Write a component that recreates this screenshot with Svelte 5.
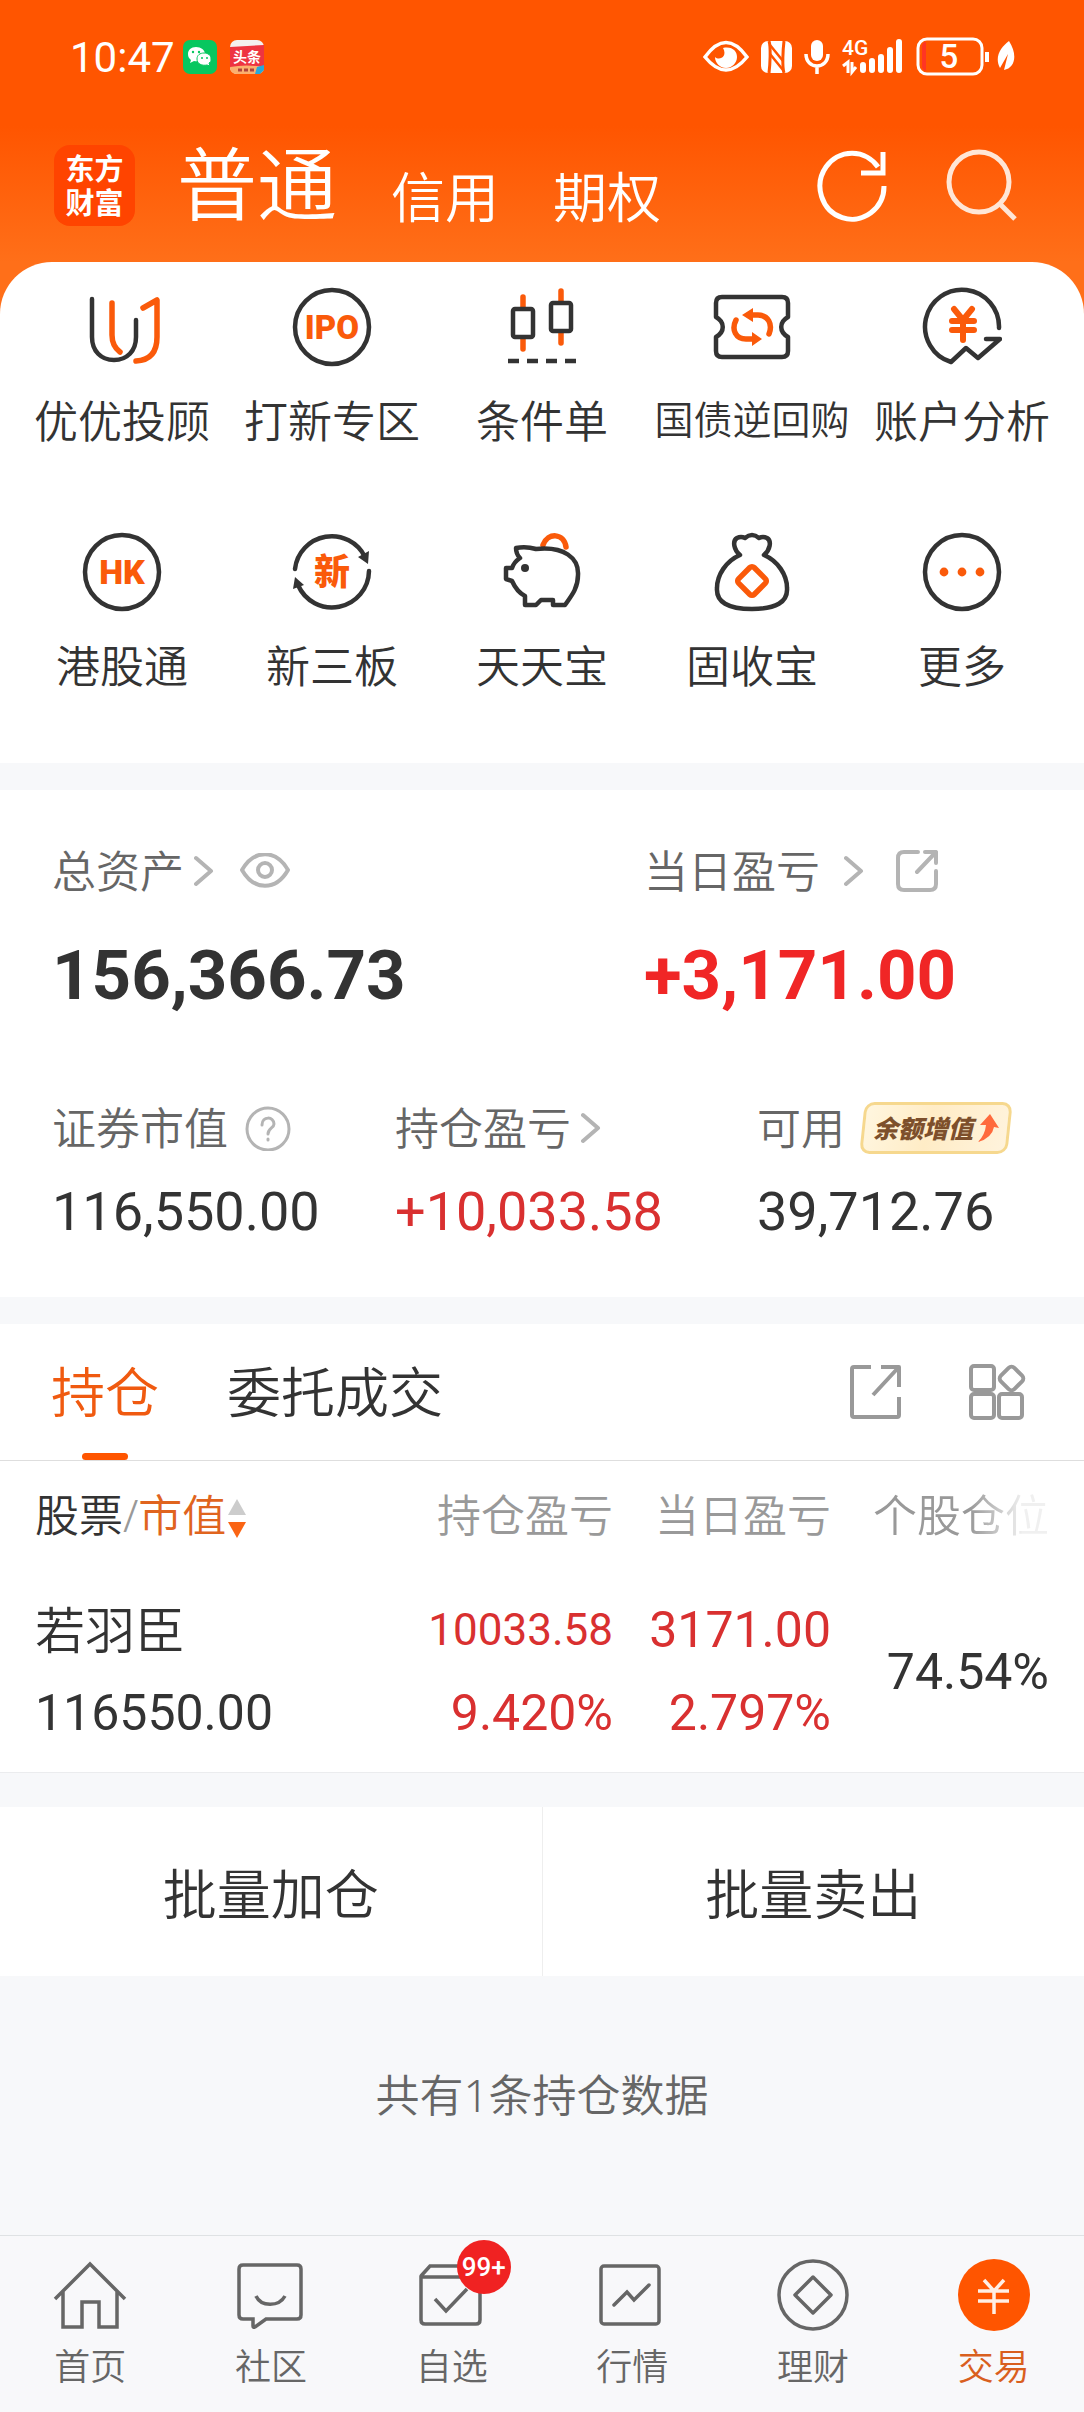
<script>
    let account = $state('普通');
    let tab = $state('持仓');
    let page = $state('交易');

    const accounts = ['普通', '信用', '期权'];
    const tabs = ['持仓', '委托成交'];

    const tools = [
        { icon: 'uu', label: '优优投顾' },
        { icon: 'ipo', label: '打新专区' },
        { icon: 'candles', label: '条件单' },
        { icon: 'ticket', label: '国债逆回购', long: true },
        { icon: 'analysis', label: '账户分析' },
        { icon: 'hk', label: '港股通' },
        { icon: 'board', label: '新三板' },
        { icon: 'pig', label: '天天宝' },
        { icon: 'bag', label: '固收宝' },
        { icon: 'more', label: '更多' },
    ];

    const holdings = [
        {
            name: '若羽臣',
            value: '116550.00',
            profit: '10033.58',
            profitRate: '9.420%',
            today: '3171.00',
            todayRate: '2.797%',
            share: '74.54%',
        },
    ];

    const pages = [
        { icon: 'home', label: '首页' },
        { icon: 'chat', label: '社区' },
        { icon: 'picks', label: '自选', badge: '99+' },
        { icon: 'market', label: '行情' },
        { icon: 'wealth', label: '理财' },
        { icon: 'trade', label: '交易' },
    ];
</script>

{#snippet toolIcon(name)}
    <svg class="tool-icon" viewBox="0 0 80 80" aria-hidden="true">
        {#if name === 'uu'}
            <path class="dark" d="M10 12V50C10 64 19 73 32 73S54 64 54 50V33" />
            <path class="hot" d="M30 16V48Q30 59 38 65M61 21L75 13V50Q75 73 54 74" />
        {:else if name === 'ipo'}
            <circle class="dark" cx="40" cy="40" r="37" />
            <text x="40" y="52" font-size="33">IPO</text>
        {:else if name === 'candles'}
            <path class="hot" d="M21 10V20M21 52V62M59 4V14M59 46V56" />
            <rect class="dark" x="11" y="22" width="20" height="28" rx="2" />
            <rect class="dark" x="49" y="16" width="20" height="28" rx="2" />
            <path class="dark butt" d="M6 74H17M25 74H36M44 74H55M63 74H74" />
        {:else if name === 'ticket'}
            <path class="dark" d="M10 10H70Q76 10 76 16V30C67 35 67 45 76 50V64Q76 70 70 70H10Q4 70 4 64V50C13 45 13 35 4 30V16Q4 10 10 10Z" />
            <path class="hot" d="M57 47C61 37 56 28 46 28H39M24 33C19 43 24 52 34 52H42" />
            <path class="hot-fill" d="M30 28L41 21V35ZM50 52L40 45V59Z" />
        {:else if name === 'analysis'}
            <path class="dark" d="M77 41A37 37 0 1 0 29 75L44 61L56 71L78 52H64" />
            <path class="hot yen" d="M32 22L41 33L50 22M30 34H52M30 43H52M41 34V53" />
        {:else if name === 'hk'}
            <circle class="dark" cx="40" cy="40" r="37" />
            <text x="40" y="52" font-size="34">HK</text>
        {:else if name === 'board'}
            <path class="dark" d="M3 37A37 37 0 0 1 73 25M77 39A37 37 0 0 1 6 53" />
            <path class="dark-fill" d="M76 32L66 25L77 19ZM3 45L1 57L12 53Z" />
            <text x="40" y="53" font-size="36">新</text>
        {:else if name === 'pig'}
            <path class="hot" d="M41 13C46 0 62 1 64 15" />
            <path class="dark" d="M14 16Q24 14 34 17C62 14 77 26 76 43C76 55 71 62 63 73H51V68H39L34 73H23V64Q15 60 10 49L4 47V36H10Q12 30 18 26Q14 22 14 16Z" />
            <circle class="dark-fill" cx="23" cy="36" r="4" />
        {:else if name === 'bag'}
            <path class="dark" d="M28 23C22 18 20 9 25 6Q29 4 33 6Q40 0 47 6Q51 4 55 6C60 9 58 18 52 23C66 29 75 43 75 56C76 70 64 77 40 77S4 70 5 56C5 43 14 29 28 23Z" />
            <rect class="hot" x="29" y="38" width="22" height="22" rx="3" transform="rotate(45 40 49)" />
        {:else}
            <circle class="dark" cx="40" cy="40" r="37" />
            <circle class="hot-fill" cx="22" cy="40" r="4.4" />
            <circle class="hot-fill" cx="40" cy="40" r="4.4" />
            <circle class="hot-fill" cx="58" cy="40" r="4.4" />
        {/if}
    </svg>
{/snippet}

{#snippet pageIcon(name)}
    <svg class="page-icon" viewBox="0 0 76 76" aria-hidden="true">
        {#if name === 'home'}
            <path d="M3 42L38 7L73 42M11 34V70H30V45H47V70H65V34" />
        {:else if name === 'chat'}
            <path d="M10 8H64Q68 8 68 12V58Q68 62 64 62H33L22 70Q20 71 20 69V62H10Q6 62 6 58V12Q6 8 10 8Z" />
            <path d="M23 39C28 50 46 50 52 39" />
        {:else if name === 'picks'}
            <path d="M7 20V63Q7 67 11 67H62Q66 67 66 63V20ZM7 19L16 9H58L66 19M21 42L32 54L53 32" />
        {:else if name === 'market'}
            <rect x="7" y="9" width="58" height="58" rx="3" />
            <path d="M20 48L33 35L40 43L55 28" stroke-linecap="round" />
        {:else if name === 'wealth'}
            <circle cx="38" cy="38" r="34" />
            <path d="M38 20L56 38L38 56L20 38Z" stroke-linejoin="round" />
        {:else}
            <circle class="coin" cx="38" cy="38" r="36" />
            <path class="coin-yen" d="M28 23L38 34L48 23M22 34H53M22 44H53M38 34V57" />
        {/if}
    </svg>
{/snippet}

{#snippet chevron()}
    <svg class="chevron" viewBox="0 0 20 32" aria-hidden="true">
        <path d="M2 3L17 16L2 29" />
    </svg>
{/snippet}

<div class="app">
    <header class="header">
        <div class="status">
            <span class="time">10:47</span>
            <svg class="notice" viewBox="0 0 34 34" aria-hidden="true">
                <rect width="34" height="34" rx="7" fill="#07c75f" />
                <path d="M13 7C8 7 5 10 5 14c0 3 1 4 3 6l-1 3 4-2c7 1 11-2 11-7 0-4-4-7-9-7z" fill="#fff" />
                <path d="M21 13c-4 0-7 2-7 6 0 5 5 7 10 6l3 1-1-3c2-1 2-2 2-4 0-4-3-6-7-6z" fill="#fff" stroke="#07c75f" />
                <g fill="#07c75f"><circle cx="10" cy="12" r="1.2" /><circle cx="16" cy="12" r="1.2" /><circle cx="19" cy="18" r="1" /><circle cx="24" cy="18" r="1" /></g>
            </svg>
            <svg class="notice news" viewBox="0 0 34 34" aria-hidden="true">
                <rect width="34" height="34" rx="7" fill="#f4f0f0" />
                <path d="M0 7L34 5V28H0Z" fill="#ee3441" />
                <path d="M0 27Q16 24 34 27Q34 34 27 34H7Q0 34 0 27Z" fill="#fbb06e" />
                <path d="M27 27L34 25V30L30 34H25Z" fill="#28a8d8" />
                <text x="17" y="22" font-size="14">头条</text>
                <path d="M8 30H12M14 30H18M20 30H24" stroke="#b3423a" stroke-width="3" />
            </svg>
            <div class="status-right">
                <svg width="46" height="40" viewBox="0 0 46 40" aria-hidden="true">
                    <path d="M2 20Q23-9 44 20Q23 46 2 20Z" fill="none" stroke="#fff" stroke-width="3.5" />
                    <path d="M20 11C29 9 34 14 34 20S29 31 23 31S12 26 12 20C16 24 25 20 20 11Z" fill="#fff" />
                </svg>
                <svg width="31" height="40" viewBox="0 0 31 40" aria-hidden="true">
                    <rect y="4" width="31" height="32" rx="7" fill="#fff" />
                    <path d="M8 4C10 10 9 28 8 36M23 36C21 30 22 12 23 4" fill="none" stroke="#ff5500" stroke-width="3" />
                    <path d="M9 8L22 24M9 17L22 33" stroke="#ff5500" stroke-width="2.5" />
                </svg>
                <svg width="26" height="40" viewBox="0 0 26 40" aria-hidden="true">
                    <rect x="7" y="3" width="12" height="21" rx="6" fill="#fff" />
                    <path d="M2 17C2 33 24 33 24 17M13 29V37" fill="none" stroke="#fff" stroke-width="3.5" />
                </svg>
                <svg class="signal" width="62" height="40" viewBox="0 0 62 40" aria-hidden="true">
                    <text x="0" y="18" font-size="21">4G</text>
                    <path d="M1 29L6 25V36M10 25V35L14 30" />
                    <path class="bars" d="M21 28V33M30 24V33M39 20V33M48 13V33M57 5V33" />
                </svg>
                <svg class="battery" width="100" height="40" viewBox="0 0 100 40" aria-hidden="true">
                    <rect x="2" y="2" width="64" height="35" rx="9" />
                    <path d="M6 10Q6 5 10 5V34Q6 33 6 29Z" />
                    <text x="33" y="31" font-size="33">5</text>
                    <path class="nub" d="M71 15V25" />
                    <path class="leaf" d="M93 4C102 18 99 31 88 33L92 17L84 31C78 20 85 10 93 4Z" />
                </svg>
            </div>
        </div>
        <div class="topbar">
            <div class="logo">东方<br />财富</div>
            <nav class="accounts">
                {#each accounts as item}
                    <button class="account {account === item ? 'active' : ''}" onclick={() => (account = item)}>{item}</button>
                {/each}
            </nav>
            <button class="top-action" aria-label="刷新">
                <svg viewBox="0 0 76 76" aria-hidden="true">
                    <path d="M70 39A32 33 0 1 1 64 20M69 5V26H47" stroke="#fff" />
                </svg>
            </button>
            <button class="top-action" aria-label="搜索">
                <svg viewBox="0 0 76 76" aria-hidden="true">
                    <circle cx="37" cy="35" r="30" stroke="#ffe6d6" />
                    <path d="M57 56L73 72" stroke="#ffe6d6" />
                </svg>
            </button>
        </div>
    </header>

    <div class="tools-wrap">
        <section class="tools">
            {#each tools as tool}
                <button class="tool">
                    {@render toolIcon(tool.icon)}
                    <span class="tool-label {tool.long ? 'long' : ''}">{tool.label}</span>
                </button>
            {/each}
        </section>
    </div>

    <section class="assets">
        <div class="totals">
            <div class="figure">
                <div class="caption">
                    总资产{@render chevron()}
                    <button class="plain eye" aria-label="显示金额">
                        <svg width="50" height="36" viewBox="0 0 50 36" aria-hidden="true">
                            <path d="M2 17C14-4 36-4 48 17C36 38 14 38 2 17Z" />
                            <circle cx="25" cy="17" r="7" />
                        </svg>
                    </button>
                </div>
                <div class="number big">156,366.73</div>
            </div>
            <div class="figure">
                <div class="caption today">
                    当日盈亏{@render chevron()}
                    <button class="plain share" aria-label="分享当日盈亏">
                        <svg width="42" height="42" viewBox="0 0 42 42" aria-hidden="true">
                            <path d="M22 2H8Q2 2 2 8V34Q2 40 8 40H34Q40 40 40 34V21M29 2H40V13M40 2L21 22" />
                        </svg>
                    </button>
                </div>
                <div class="number big up">+3,171.00</div>
            </div>
        </div>
        <div class="details">
            <div class="figure">
                <div class="caption">
                    证券市值
                    <button class="plain help" aria-label="证券市值说明">
                        <svg width="46" height="46" viewBox="0 0 46 46" aria-hidden="true">
                            <circle cx="23" cy="24" r="21" />
                            <path d="M17 20C17 11 29 11 29 19C29 23 23 23 23 29M23 34V35" />
                        </svg>
                    </button>
                </div>
                <div class="number">116,550.00</div>
            </div>
            <div class="figure">
                <div class="caption">持仓盈亏{@render chevron()}</div>
                <div class="number up">+10,033.58</div>
            </div>
            <div class="figure">
                <div class="caption">
                    可用
                    <button class="bonus">
                        <span>余额增值</span>
                        <svg width="22" height="30" viewBox="0 0 22 30" aria-hidden="true">
                            <path d="M13 1L22 15L17 14Q15 25 1 29Q8 22 9 12L3 12Z" fill="#ff6a3c" />
                        </svg>
                    </button>
                </div>
                <div class="number">39,712.76</div>
            </div>
        </div>
    </section>

    <section class="positions">
        <div class="tabs">
            {#each tabs as item}
                <button class="tab {tab === item ? 'active' : ''}" onclick={() => (tab = item)}>{item}</button>
            {/each}
            <div class="tab-actions">
                <button class="plain" aria-label="分享持仓">
                    <svg width="56" height="56" viewBox="0 0 56 56" aria-hidden="true">
                        <path d="M22 3H5Q3 3 3 5V51Q3 53 5 53H48Q50 53 50 51V33M32 3H50V23M49 4L24 31" />
                    </svg>
                </button>
                <button class="plain" aria-label="更多功能">
                    <svg width="60" height="60" viewBox="0 0 60 60" aria-hidden="true">
                        <rect x="4" y="4" width="23" height="24" rx="3" />
                        <rect x="4" y="32" width="23" height="24" rx="3" />
                        <rect x="32" y="32" width="23" height="24" rx="3" />
                        <rect x="35" y="7" width="19" height="19" rx="4" transform="rotate(45 44.5 16.5)" />
                    </svg>
                </button>
            </div>
        </div>

        <table class="holdings">
            <thead>
                <tr>
                    <th class="sort">
                        <span class="stock">股票</span>/<span class="by">市值</span><svg width="20" height="42" viewBox="0 0 20 42" aria-hidden="true">
                            <path d="M11 0L20 16H2Z" fill="#ccc" />
                            <path d="M11 39L20 23H2Z" fill="#fa6414" />
                        </svg>
                    </th>
                    <th>持仓盈亏</th>
                    <th>当日盈亏</th>
                    <th><span class="fade">个股仓位</span></th>
                </tr>
            </thead>
            <tbody>
                {#each holdings as row}
                    <tr>
                        <td>
                            <div class="name">{row.name}</div>
                            <div>{row.value}</div>
                        </td>
                        <td class="up">
                            <div class="small">{row.profit}</div>
                            <div>{row.profitRate}</div>
                        </td>
                        <td class="up">
                            <div>{row.today}</div>
                            <div>{row.todayRate}</div>
                        </td>
                        <td>{row.share}</td>
                    </tr>
                {/each}
            </tbody>
        </table>
    </section>

    <div class="batch">
        <button>批量加仓</button>
        <button>批量卖出</button>
    </div>

    <p class="note">共有{holdings.length}条持仓数据</p>

    <nav class="pages">
        {#each pages as item}
            <button class="page {page === item.label ? 'active' : ''}" onclick={() => (page = item.label)}>
                <span class="page-icon-box">
                    {@render pageIcon(item.icon)}
                    {#if item.badge}
                        <span class="badge">{item.badge}</span>
                    {/if}
                </span>
                {item.label}
            </button>
        {/each}
    </nav>
</div>

<style>
    :global(body) {
        margin: 0;
        background: #f7f8fa;
    }

    .app, .app * {
        box-sizing: border-box;
    }

    .app {
        display: flex;
        flex-direction: column;
        min-height: 100vh;
        font-family: "Noto Sans", "Noto Sans CJK SC", sans-serif;
        font-weight: 350;
        color: #333;
        background: #f7f8fa;
    }

    button {
        font: inherit;
        color: inherit;
        background: none;
        border: 0;
        padding: 0;
        margin: 0;
        cursor: pointer;
    }

    svg {
        display: block;
        flex: none;
    }

    /* header */
    .header {
        background: linear-gradient(#ff5500 48%, #ff6f19);
        color: #fff;
    }

    .status {
        display: flex;
        align-items: center;
        height: 114px;
        padding: 0 68px 0 70px;
    }

    .time {
        font-family: Roboto, sans-serif;
        font-weight: 400;
        font-size: 42px;
        margin-right: 8px;
    }

    .notice {
        width: 34px;
        height: 34px;
        margin-right: 13px;
    }

    .news text {
        font-weight: 700;
        fill: #fff;
        text-anchor: middle;
    }

    .status-right {
        display: flex;
        align-items: center;
        gap: 12px;
        margin-left: auto;
    }

    .signal text, .battery text {
        font-family: Roboto, sans-serif;
        font-weight: 500;
        fill: #fff;
    }

    .signal path {
        fill: none;
        stroke: #fff;
        stroke-width: 3;
    }

    .signal .bars {
        stroke-width: 6;
        stroke-linecap: round;
    }

    .battery rect {
        fill: none;
        stroke: #fff;
        stroke-width: 3;
    }

    .battery path {
        fill: #ff3524;
    }

    .battery text {
        text-anchor: middle;
    }

    .battery .nub {
        stroke: #fff;
        stroke-width: 4;
    }

    .battery .leaf {
        fill: #fff;
    }

    .topbar {
        display: flex;
        align-items: center;
        height: 148px;
        padding: 0 66px 6px 54px;
    }

    .logo {
        width: 81px;
        height: 81px;
        padding-top: 8px;
        border-radius: 16px;
        background: #ff4400;
        font-family: "Liberation Sans", "Noto Sans CJK SC", sans-serif;
        font-size: 29px;
        font-weight: 700;
        line-height: 34px;
        text-align: center;
    }

    .accounts {
        display: flex;
        align-items: flex-end;
        gap: 54px;
        margin: 0 auto 0 42px;
        padding-bottom: 4px;
    }

    .account {
        font-size: 54px;
        line-height: 68px;
    }

    .account.active {
        font-size: 80px;
        line-height: 96px;
    }

    .top-action {
        margin-left: 52px;
    }

    .top-action svg {
        width: 76px;
        height: 76px;
        fill: none;
        stroke-width: 5;
    }

    /* shortcuts */
    .tools-wrap {
        background: #ff6f19;
    }

    .tools {
        display: grid;
        grid-template-columns: repeat(5, 1fr);
        row-gap: 81px;
        padding: 25px 17px 67px;
        border-radius: 52px 52px 0 0;
        background: #fff;
    }

    .tool {
        display: flex;
        flex-direction: column;
        align-items: center;
        gap: 24px;
    }

    .tool-icon {
        width: 80px;
        height: 80px;
    }

    .tool-icon .dark, .tool-icon .hot {
        fill: none;
        stroke: #333;
        stroke-width: 4.5;
        stroke-linecap: round;
        stroke-linejoin: round;
    }

    .tool-icon .butt {
        stroke-linecap: butt;
    }

    .tool-icon .hot {
        stroke: #fa5a0a;
        stroke-width: 5.5;
    }

    .tool-icon .yen {
        stroke-width: 6;
    }

    .tool-icon .dark-fill {
        fill: #333;
    }

    .tool-icon .hot-fill {
        fill: #fa5a0a;
    }

    .tool-icon text {
        font-family: Roboto, "Noto Sans CJK SC", sans-serif;
        font-weight: 900;
        fill: #fa5a0a;
        text-anchor: middle;
    }

    .tool-label {
        font-size: 44px;
        line-height: 60px;
        white-space: nowrap;
    }

    .tool-label.long {
        font-size: 39px;
        line-height: 56px;
    }

    /* assets */
    .assets {
        margin-top: 27px;
        padding: 51px 52px 55px;
        background: #fff;
    }

    .totals {
        display: grid;
        grid-template-columns: 592fr 388fr;
    }

    .details {
        display: grid;
        grid-template-columns: 343fr 362fr 275fr;
        margin-top: 82px;
    }

    .caption {
        display: flex;
        align-items: center;
        height: 60px;
        font-size: 44px;
        line-height: 60px;
        color: #666;
        white-space: nowrap;
    }

    .plain svg, .chevron {
        fill: none;
        stroke: #b4b4b4;
        stroke-width: 4;
        stroke-linejoin: round;
        stroke-linecap: round;
    }

    .chevron {
        width: 20px;
        height: 32px;
        margin-left: 10px;
    }

    .today .chevron {
        margin-left: 24px;
    }

    .eye {
        margin-left: 26px;
    }

    .share {
        margin-left: 32px;
    }

    .help {
        margin-left: 17px;
    }

    .help svg {
        stroke-width: 3;
    }

    .number {
        margin-top: 24px;
        font-family: Roboto, sans-serif;
        font-weight: 400;
        font-size: 54px;
        line-height: 60px;
    }

    .number.big {
        margin-top: 35px;
        font-size: 69px;
        font-weight: 700;
        line-height: 80px;
    }

    .up {
        color: #d93030;
    }

    .big.up {
        color: #f02626;
    }

    .bonus {
        position: relative;
        display: flex;
        align-items: center;
        gap: 4px;
        width: 148px;
        height: 52px;
        margin-left: 17px;
        padding-left: 11px;
        font-size: 25px;
        font-weight: 900;
        font-style: italic;
        color: #7d4f2b;
    }

    .bonus::before {
        content: '';
        position: absolute;
        inset: 0;
        border: 3px solid #f6d88e;
        border-radius: 10px;
        background: linear-gradient(100deg, #fff6df, #ffecc6 45%, #fff3dc);
        transform: skewX(-6deg);
    }

    .bonus span, .bonus svg {
        position: relative;
    }

    /* positions */
    .positions {
        margin-top: 27px;
        background: #fff;
        border-bottom: 1px solid #ebecee;
    }

    .tabs {
        display: flex;
        gap: 68px;
        height: 137px;
        padding: 0 57px 0 51px;
        border-bottom: 1px solid #dedede;
    }

    .tab {
        position: relative;
        font-size: 54px;
        line-height: 80px;
    }

    .tab.active {
        color: #f05a10;
    }

    .tab.active::after {
        content: '';
        position: absolute;
        left: 50%;
        bottom: 0;
        width: 46px;
        height: 7px;
        margin-left: -23px;
        border-radius: 4px;
        background: #ff5500;
    }

    .tab-actions {
        display: flex;
        align-items: center;
        gap: 62px;
        margin-left: auto;
    }

    .tab-actions svg {
        stroke: #999;
        stroke-linecap: butt;
    }

    .holdings {
        width: 100%;
        padding: 0 35px;
        table-layout: fixed;
        border-collapse: separate;
        border-spacing: 0;
        text-align: right;
    }

    .holdings th {
        width: 218px;
        height: 108px;
        padding: 0;
        font-size: 44px;
        font-weight: inherit;
        line-height: 60px;
        color: #999;
        white-space: nowrap;
    }

    .holdings th.sort {
        width: auto;
        text-align: left;
    }

    .sort svg {
        display: inline-block;
        vertical-align: middle;
    }

    .stock {
        color: #333;
    }

    .by {
        color: #e0641e;
    }

    .fade {
        mask-image: linear-gradient(90deg, #000 55%, rgba(0, 0, 0, 0.15) 85%);
    }

    .holdings td {
        padding: 20px 0 17px;
        font-family: Roboto, sans-serif;
        font-weight: 400;
        font-size: 50px;
        line-height: 83px;
    }

    .holdings td:first-child {
        text-align: left;
    }

    .holdings .name {
        font-family: "Noto Sans", "Noto Sans CJK SC", sans-serif;
        font-weight: 350;
    }

    .holdings .small {
        font-size: 44px;
    }

    /* batch actions */
    .batch {
        display: flex;
        margin-top: 34px;
        background: #fff;
    }

    .batch button {
        flex: 1;
        height: 169px;
        font-size: 54px;
    }

    .batch button + button {
        border-left: 1px solid #eee;
    }

    .note {
        margin: 0;
        padding: 89px 0;
        font-size: 44px;
        line-height: 60px;
        text-align: center;
        color: #666;
    }

    /* bottom navigation */
    .pages {
        display: flex;
        margin-top: auto;
        padding: 21px 0;
        border-top: 1px solid #dfe2e4;
        background: #f8f8fa;
    }

    .page {
        display: flex;
        flex: 1;
        flex-direction: column;
        align-items: center;
        gap: 10px;
        font-size: 36px;
        line-height: 48px;
        color: #666;
    }

    .page.active {
        color: #d95f1e;
    }

    .page-icon-box {
        position: relative;
    }

    .page-icon {
        width: 76px;
        height: 76px;
        fill: none;
        stroke: #666;
        stroke-width: 3.5;
    }

    .page-icon .coin {
        fill: #ff5500;
        stroke: none;
    }

    .page-icon .coin-yen {
        stroke: #ffeee4;
    }

    .badge {
        position: absolute;
        top: -17px;
        left: 43px;
        width: 54px;
        height: 54px;
        border-radius: 50%;
        background: #f02222;
        color: #fff;
        font-family: Roboto, sans-serif;
        font-weight: 500;
        font-size: 26px;
        line-height: 54px;
        text-align: center;
    }
</style>
